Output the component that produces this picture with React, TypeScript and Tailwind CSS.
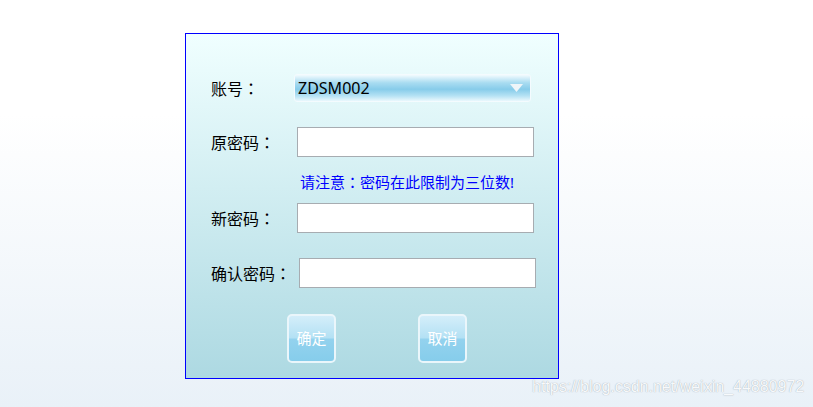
import React from 'react';

const font = "font-['Noto_Sans','Noto_Sans_CJK_SC',sans-serif]";

// full-width colon, centred like the reference's font
function Colon() {
  return <span className="font-['Noto_Sans_CJK_TC',sans-serif]">：</span>;
}

function Field({ label, labelWidth }: { label: string; labelWidth: string }) {
  return (
    <div className="flex items-center">
      <span className={`${labelWidth} text-[16px] leading-5 text-black`}>
        {label}
        <Colon />
      </span>
      <input
        type="password"
        className="h-[30px] w-[237px] border border-[#a7acb1] bg-white outline-none"
      />
    </div>
  );
}

function GlossButton({ text }: { text: string }) {
  return (
    <button className="flex h-[49px] w-[49px] items-center justify-center rounded-[5px] border-2 border-[#eaf6fb] bg-[linear-gradient(to_bottom,#d4eefa_0%,#b4e1f4_48%,#93d2ee_52%,#86cdeb_100%)] text-[15px] text-white">
      {text}
    </button>
  );
}

export default function App() {
  return (
    <div
      className={`relative h-[407px] w-full overflow-hidden bg-[linear-gradient(to_bottom,#ffffff_28%,#e9f1f8_100%)] pt-[33px] ${font}`}
    >
      {/* Change-password panel */}
      <div className="ml-[185px] flex h-[346px] w-[374px] flex-col border border-[#0000ff] bg-[linear-gradient(to_bottom,#f0ffff_0%,#add9e2_100%)] pl-[25px]">
        {/* Account select */}
        <div className="mt-[40px] flex items-center">
          <span className="w-[83px] text-[16px] leading-5 text-black">
            账号
            <Colon />
          </span>
          <div className="flex h-[28px] w-[237px] items-center justify-between rounded-[3px] border border-[#f4fbfe] bg-[linear-gradient(to_bottom,#f2fbfe_0%,#a9dcf1_30%,#87ccea_55%,#b5e2f4_80%,#eaf8fd_100%)] pl-[3px] pr-[7px]">
            <span className="text-[16px] leading-5 text-black">ZDSM002</span>
            <svg width="13" height="8" viewBox="0 0 13 8">
              <polygon points="0,0 13,0 6.5,8" fill="#eef5f9" />
            </svg>
          </div>
        </div>

        <div className="mt-[25px]">
          <Field label="原密码" labelWidth="w-[86px]" />
        </div>

        <p className="mt-[15px] ml-[89px] text-[15px] leading-5 text-[#0000ff]">
          请注意
          <Colon />
          密码在此限制为三位数!
        </p>

        <div className="mt-[11px]">
          <Field label="新密码" labelWidth="w-[86px]" />
        </div>

        <div className="mt-[25px]">
          <Field label="确认密码" labelWidth="w-[88px]" />
        </div>

        <div className="mt-[26px] ml-[76px] flex gap-[82px]">
          <GlossButton text="确定" />
          <GlossButton text="取消" />
        </div>
      </div>

      {/* Watermark */}
      <span className="absolute left-[532px] top-[378px] font-['Liberation_Sans',sans-serif] text-[16px] leading-[18px] text-[#f7f9fb] [text-shadow:0_0_1px_rgba(110,120,130,0.7)]">
        https://blog.csdn.net/weixin_44880972
      </span>
    </div>
  );
}
